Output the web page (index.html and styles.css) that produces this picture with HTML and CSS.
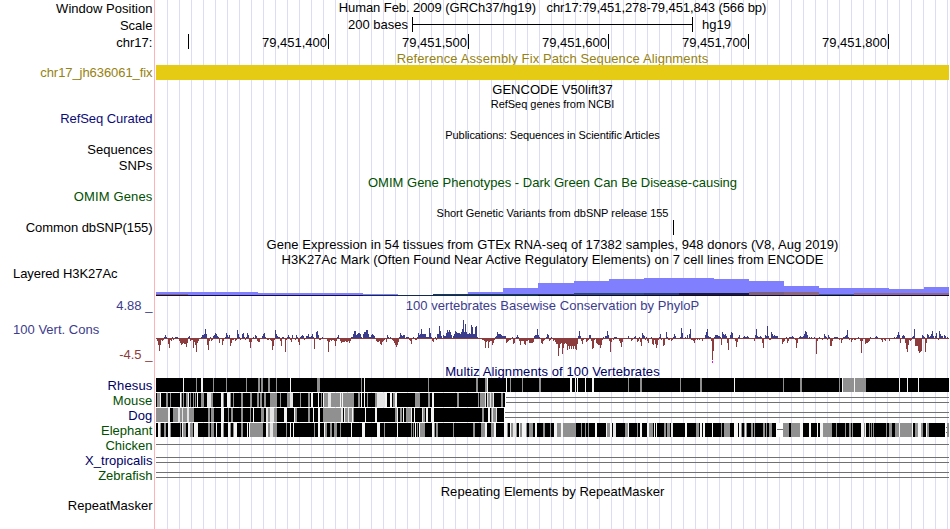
FILE: index.html
```html
<!DOCTYPE html>
<html lang="en">
<head>
<meta charset="utf-8">
<title>chr17:79,451,278-79,451,843</title>
<link rel="stylesheet" href="styles.css">
</head>
<body>
<main class="browser">
  <div class="row h17"><span class="label">Window Position</span><div class="title up t-pos">Human Feb. 2009 (GRCh37/hg19) &nbsp; chr17:79,451,278-79,451,843 (566 bp)</div></div>
  <div class="row h17"><span class="label">Scale</span><div class="scale"><span class="scale-text">200 bases</span><i class="scale-bar"></i><span class="scale-db">hg19</span></div></div>
  <div class="row h17"><span class="label">chr17:</span><div class="ruler"><span></span><span>79,451,400</span><span>79,451,500</span><span>79,451,600</span><span>79,451,700</span><span>79,451,800</span></div></div>
  <div class="row h14"><span></span><div class="title gold t-ref">Reference Assembly Fix Patch Sequence Alignments</div></div>
  <div class="row h15"><span class="label tight gold">chr17_jh636061_fix</span><div class="patch"></div></div>
  <div class="row h17"><span></span><div class="title down">GENCODE V50lift37</div></div>
  <div class="row h13"><span></span><div class="title small">RefSeq genes from NCBI</div></div>
  <div class="row h17"><span class="label tight navy">RefSeq Curated</span></div>
  <div class="row h15"><span></span><div class="title small down t-pub">Publications: Sequences in Scientific Articles</div></div>
  <div class="row h15"><span class="label">Sequences</span></div>
  <div class="row h16"><span class="label wide">SNPs</span></div>
  <div class="row h16"><span></span><div class="title green down t-omim">OMIM Gene Phenotypes - Dark Green Can Be Disease-causing</div></div>
  <div class="row h15"><span class="label wide green">OMIM Genes</span></div>
  <div class="row h16"><span></span><div class="title small down">Short Genetic Variants from dbSNP release 155</div></div>
  <div class="row h15"><span class="label tight">Common dbSNP(155)</span><div class="snp"></div></div>
  <div class="row h17"><span></span><div class="title down t-gtex">Gene Expression in 54 tissues from GTEx RNA-seq of 17382 samples, 948 donors (V8, Aug 2019)</div></div>
  <div class="row h14"><span></span><div class="title t-h3k">H3K27Ac Mark (Often Found Near Active Regulatory Elements) on 7 cell lines from ENCODE</div></div>
  <div class="row h30"><span class="label tight left h3k-label">Layered H3K27Ac</span><svg id="h3k" width="793" height="30" shape-rendering="crispEdges"></svg></div>
  <div class="row cons">
    <div class="axis"><span class="label blue">4.88 _</span><span class="label blue left up">100 Vert. Cons</span><span class="label red">-4.5 _</span></div>
    <div class="wiggle"><div class="title blue">100 vertebrates Basewise Conservation by PhyloP</div><svg id="phylop" width="793" height="48" shape-rendering="crispEdges"></svg></div>
  </div>
  <div class="row h15"><span></span><div class="title navy2 down t-multiz">Multiz Alignments of 100 Vertebrates</div></div>
  <div class="row h15"><span class="label wide navy2">Rhesus</span><svg id="rhesus" width="793" height="15" shape-rendering="crispEdges"></svg></div>
  <div class="row h15"><span class="label wide green">Mouse</span><svg id="mouse" width="793" height="15" shape-rendering="crispEdges"></svg></div>
  <div class="row h15"><span class="label wide navy2">Dog</span><svg id="dog" width="793" height="15" shape-rendering="crispEdges"></svg></div>
  <div class="row h15"><span class="label green">Elephant</span><svg id="elephant" width="793" height="15" shape-rendering="crispEdges"></svg></div>
  <div class="row h15"><span class="label green">Chicken</span><div class="single"></div></div>
  <div class="row h15"><span class="label navy2">X_tropicalis</span><div class="double"></div></div>
  <div class="row h15"><span class="label green">Zebrafish</span><div class="double"></div></div>
  <div class="row h15"><span></span><div class="title down">Repeating Elements by RepeatMasker</div></div>
  <div class="row h15"><span class="label">RepeatMasker</span></div>
</main>
<script src="tracks.js"></script>
</body>
</html>
```
FILE: styles.css
```css
* { box-sizing: border-box; }
body { margin: 0; background: #fff; overflow: hidden; }
.browser {
  width: 950px; height: 529px; overflow: hidden;
  font: 13px/15px "Liberation Sans", Arial, sans-serif; color: #000;
  background:
    linear-gradient(#ffb4b4, #ffb4b4) 154px 0 / 1px 100% no-repeat,
    repeating-linear-gradient(90deg, #dcdcf5 0 1px, transparent 1px 12px) 167px 0 / 783px 100% no-repeat;
}
.row { display: grid; grid-template-columns: 152.5px 793px; column-gap: 3.5px; }
.row > * { min-width: 0; }
svg { display: block; }
.h13 { height: 13px; } .h14 { height: 14px; } .h15 { height: 15px; } .h16 { height: 16px; }
.h17 { height: 17px; } .h30 { height: 30px; }
.label { text-align: right; white-space: nowrap; letter-spacing: .02px; align-self: center; }
.label.wide { letter-spacing: .15px; }
.label.tight { letter-spacing: -.07px; }
.label.left { text-align: left; padding-left: 13px; }
.title { text-align: center; white-space: nowrap; align-self: center; letter-spacing: .03px; }
.title.small { font-size: 11px; letter-spacing: -.03px; }
.title.t-pos { letter-spacing: -.08px; }
.title.t-ref { letter-spacing: .11px; }
.title.t-pub { letter-spacing: -.07px; }
.title.t-omim { letter-spacing: .01px; }
.title.t-gtex, .title.t-h3k { letter-spacing: .05px; }
.title.t-multiz { letter-spacing: .1px; }
.up { transform: translateY(-1px); }
.down { transform: translateY(1px); }
.gold { color: #968210; } .navy { color: #0c0c78; } .navy2 { color: #000064; }
.green { color: #005000; } .blue { color: #3c3c8c; } .red { color: #8c3c3c; }
.scale { display: flex; }
.scale-text { width: 256px; text-align: right; padding-right: 4px; line-height: 15px; }
.scale-bar {
  width: 281px; height: 15px; border: solid #000; border-width: 0 1px;
  background: linear-gradient(#000, #000) 0 7px / 100% 1px no-repeat;
}
.scale-db { padding-left: 9px; }
.ruler { display: flex; height: 15px; line-height: 17px; }
.ruler span { width: 140px; border-right: 1px solid #000; text-align: right; padding-right: 1px; }
.ruler span:first-child { width: 33px; }
.patch { background: #e6cb14; }
.snp { width: 518px; border-right: 1px solid #000; }
.h3k-label { align-self: start; }
.cons { height: 67px; }
.axis { display: flex; flex-direction: column; padding-top: 2px; height: 66px; justify-content: space-between; }
.axis .label { align-self: stretch; }
.wiggle { padding-top: 2px; }
.wiggle .title { height: 17px; }
.single { background: linear-gradient(#707070, #707070) 0 6px / 100% 1px no-repeat; }
.double {
  background:
    linear-gradient(#707070, #707070) 0 4px / 100% 1px no-repeat,
    linear-gradient(#707070, #707070) 0 9px / 100% 1px no-repeat;
}
```
FILE: tracks.js
```js
const LEFT = 156;
const NS = 'http://www.w3.org/2000/svg';

function rect(svg, x, y, w, h, fill) {
  const r = document.createElementNS(NS, 'rect');
  const a = { x: x - LEFT, y, width: w, height: h, fill };
  for (const k in a) r.setAttribute(k, a[k]);
  svg.appendChild(r);
}

// Layered H3K27Ac signal: [start, end, height above the baseline]
const h3k = document.getElementById('h3k');
[[156,258,3],[258,363,2],[363,398,1],[468,503,3],[503,538,7],[538,574,12],[574,609,14],[609,644,16],
 [644,714,17],[714,749,16],[749,784,14],[784,819,9],[819,889,7],[889,924,6],[924,949,8]]
  .forEach(([a, b, h]) => rect(h3k, a, 29 - h, b - a, h, '#8080ff'));
[[156,188,28,1,'#806478'],[433,574,28,1,'#183858'],[574,644,27,2,'#284878'],[644,679,27,2,'#243c70'],[679,749,27,2,'#181c3c'],
 [749,784,26,3,'#7c6080'],[784,819,26,3,'#8c6880'],[819,854,28,1,'#3860a0'],[854,949,27,2,'#8c6890'],
 [156,363,29,1,'#140a46'],[363,538,29,1,'#142850'],[538,949,29,1,'#180828']]
  .forEach(([a, b, y, h, c]) => rect(h3k, a, y, b - a, h, c));

// PhyloP scores in pixels: start position, then one value per base column
const phylop = document.getElementById('phylop');
const scores = `
156 -1 -3 -7 -13 -7 -2 -3 -2 1 3 1 -1
168 -6 -10 -2 -3 1 -2 -1 1 1 1 -1
179 -3 -5 -7 -6 -5 -6 -6 -9 -5 1 2
190 -3 -2 -2 -10 -4 -7 -14 -5 -3 -1 -1
201 1 3 3 4 9 4 -7
208 -12 -3 1 -3 -2 2 3 5 4 2 1 -5 -1 -1
222 -7 -3 -1 1 5 3 1 3
230 -8 -5 -2 -2 -1 -3 -2
237 8 4 1 -2 -1 4 5 1 -2 1 5 3 -4
250 -10 -4 -1 1 -1 3 2 -3 -4 -4 -1 -1 2 4 5 1 -1 -2 -2 -1 -2 -3
272 -12 -8 -2 8 4 2 1 1 -3 -8 1 1 -1 -7
285 -14 -2 1 3 1 -2 -4 3 -1 -1 -2 3 1
298 -4 -7 1 2 3 2 -2 -1 2 2 4 1 1 2 4 1
314 -11 -1 6 7 3 -2 -2 -1 1 -1 -1 -1 -1 -3
328 -14 -4 -2 -3 -2 -2 -3
335 -8 -3 1 3 -1 -3 -5 -4 -4 -4 -3 -4 -4 -3 -5 -3 1 1
353 4 7 7 3 4 5 5 4 1 -1
363 4 6 6 8 8 4 1 1 3 4 3 2 -1 -3 -4 -4 -3
380 -6 -7 -4 -3 -2 -1 -4 3 1 -1 1 -1 -2 -3 -5
395 -7 -9 -7 -4 1 5 3 2 3 3 -1 1 1 1 -2
410 -3 -6 -1 1 -1 -2 -2 1
418 5 3 4 9 4 4 4 4 1 1 1
429 10 5 1 -3 -4 -1 1 -2 4
438 4 12 7 2 -1 3 2 2
446 5 8 6 8 6 3 -1 2 4 7 6 5 5 5 4
461 6 9 18 6 14 6 4 4 5 4 13 11 4
474 4 11 12 1 -1 -1 -1 -1 -2 -2 -3
485 -10 -4 -3
488 -10 -4 -3 -3 -7 -5 -2 1 2 6 4 4 4 3
502 2 2 2 2 -5 -4 -3 -2 -2 -1 1
513 -6 -5 -1 1 3 1 -3 -7
521 -3 -3 -3 -6 -7 -3 -3 -2
529 -5 -5 -5 -5 -4 2 3 3 9 3 1 -1
541 -5 -6 -3 -2 -1 1 4 3 -3 -2 1 -1 -3 -2 -4 -6 -6
558 -18 -10 -6 -5 -16 -10 -6 -5 -6
567 -12 -8 -11 -8 -11 -8 -11 -8 -11 -12 -6 2
579 7 2 -3 -6 -2 -1 -1 -4 -3 -2 3
590 3 -3 -11 -10 -2 -1 -5 -6 -7 -7 -10 -7
602 -2 1 -1 2 2 7 3 -3
610 -14 -4 -1 -2 1 1 1 -1 -1
619 -3 -5 -9 -4 -1 -1 -1 -1 -1
628 2 -1 -1 -3 -2 -1 1 2 -1 -4 -3 1 -4
641 -8 5 3 2 -2 1 -3 -5 -1 -1 1 -6 -7 -2 -6
656 -10 -7 -2 1 4 -2 -1
663 -8 -7 -1 6 1 -2 -2 -1 -3 -2 1 4 2 -1 -1 -1 -1
680 1 10 5 -1 -1 1 -1 3 -1 4
690 9 -2 -2 -3 -5 -2 -1 -2 -1 -2 -1 -1 -3 -1 -1 3
706 6 9 2 1 1 -3
712 -22 -13 1 3 3 3 2 2 1
721 -7 6 4 3 4 2 -5
728 -12 -1 3 6 5 -1 -1 -3
736 -9 -4 1 3 -1 -1 -1 1 2 1 1 2 1 -1 -1 -1 -1 -1 -3 3
756 9 2 1 1 2 1 -5
763 -10 -1 3 2
767 12 2 -2 -2 6 4 2 3 2 2 2 -1 -1 -1 -1
782 -6 -4 -3 -1 1 -5 -3 1 1 1 2 1 -1 -2
796 -10 -5 -1 1 2 1 1 2 4 7 6 3 -1 1 -1 1 -1 -1 1 -1
816 -16 -3 -1 1 -1 -1 -2 -1 4 2 1 -2 3 1
830 -8 -8 -3 -1 1 1 1 1 -1 -2 -1
841 -5 -2 1 1 2 3
847 8 1 -2 -1 -4 -2 -1 -2 -2 -1 -1 1 -1 -3
861 -15 -3 -1 -1 -6 -5 -5 -4 -3 1 -1 -1 -1 -1
875 1 2 1 -1 -1 -1 -2 -4 -1 -2 -3 -1 -1 -1
889 -3 -1 -1 -1 -1 1 -1 1 3
898 6 3 -5 -1 2 3 2 -5
906 -11 -14 -7 -2 -3 -2 1 2
914 9 -8 -8 -8 -13 -15 -14 -13
922 3 2 1 -14 -5 4 3 1 2 4 7 2 -1 2 5 -1 -2 1
939 7 4 2 2 -1 3 2 -1 1 -1
`;
rect(phylop, LEFT, 23, 793, 1, '#8c3c3c');
scores.trim().split('\n').forEach(line => {
  const [start, ...vals] = line.trim().split(' ').map(Number);
  vals.forEach((v, i) => {
    if (v > 0) rect(phylop, start + i, 23 - v, 1, v, '#3c3c8c');
    else rect(phylop, start + i, 23, 1, -v, '#8c3c3c');
  });
});
rect(phylop, 712, 46, 1, 2, '#ff00ff');

// Alignment identity stripes over black, in thirds of a pixel from `base`
const COLORS = { g: '#909090', l: '#e4e4e4', w: '#f4f4f4', x: '#ffffff' };
function stripes(svg, base, text) {
  text.trim().split(/\s+/).forEach(tok => {
    const [a, b] = tok.slice(1).split('-').map(Number);
    const x0 = Math.round(a / 3);
    const x1 = b ? Math.max(x0 + 1, Math.round(b / 3)) : x0 + 1;
    rect(svg, base + x0, 0, x1 - x0, 14, COLORS[tok[0]]);
  });
}
function species(id, end, parts) {
  const svg = document.getElementById(id);
  rect(svg, LEFT, 0, end - LEFT, 14, '#000');
  for (const [base, text] of parts) stripes(svg, base, text);
  if (end < 949) [4, 9].forEach(y => rect(svg, end + 1, y, 949 - end - 1, 1, '#707070'));
  return svg;
}
species('rhesus', 949, [
  [150, 'w99 g138 w153-159 g189 g228 g288 g324-330 g333-339 g354-360 g378 w420 g501-510 g633 w642'],
  [410, 'g54 g198-204 g225-231 w231 w288 g300 g336 g387-393 w480-486 w495 w501 w525 w546-552 g654 g690-696'],
  [680, 'g0 g60-66 w162 g309 g360-366 g477 w486 g489-522 w522 g525-558 w657 w681 w714'],
]);
species('mouse', 505, [
  [150, 'g21 g24-30 w30 g48-54 g60 w90 g93 g99 g108-114 w114 g120 g129 g135 w141 g153-162 l171-183 g183-189 w213-219 g219 w231-240 g240 g249 g273-279 g300-306 g321-327 g330-336 g342-348 g360-381 g390 g411-420 l420-429 g450 g474-480 w483-489 w504 g513-516 w519 g522-534 l534-543 g543-570 w570 g573 w576 g579-612 g624-630 w633 w642 g651 g675-681 l681-705 w705-711 w720-726 g729-735 w735-741 g795-810'],
  [410, 'g15-30 g54-60 w66-72 g141-147 g204 g210-225 l225 l231-234 g234-240 l240 g243-249 l249 g273-279'],
]);
species('dog', 504, [
  [150, 'g18-54 w54-60 g69-84 l84-90 g90-96 l96 g99-111 l111-117 g117-132 g174-180 g183-192 w213-222 g234 g243-249 g273-279 g300 w309 g333-342 l348-354 g354-360 l360-372 g372-381 w402-411 w432 g435-441 g474-480 w489 w504-510 g519-573 l573-579 w582 g585-594 l594 g597-606 w606 g609 w645 w675-681 g735-741 w741 g750-756 w759 g768-783 w792'],
  [410, 'w3 w12 l36 g39-45 w48-54 w63-72 g216-222 w234-240 g243-249 l246 g249-258 l258'],
]);
const elephant = species('elephant', 949, [
  [150, 'w24-30 g30 g42-48 w54-60 g60 g90 w96 g99-108 w114-120 g120-129 w132-144 g174-180 g183-192 w198 w213-219 g219 w234-240 g240 g249 w252-261 g273-279 w291 w297 g300-339 w348-354 g354-360 l360-369 g369-381 g408 w420 w429 g492 w504-510 w522 g525-531 g540-546 g552-561 g570 w603 w636-645 w681-690 g702 w741 g783 w795'],
  [410, 'g3 g9 g21 w27 g30-45 w66-72 g72 g78-84 g129 g189-195 g213-225 w225-231 g243-252 w252-258 w282-291 g291 w300 g303-309 l309-318 g318 w327 g330-336 w336-348 g348 g357-369 w375-381 g399-405 g420 w432-441 g441-453 w453-459 g459-498 g513 g525 g534 w555-561 w588 g591-600 w600-606 l609-618 g645-654 w654 g681 w690-696 w711-717 g717-729 w732 w738 g762-768 g771-780 l783-789'],
  [680, 'w15-21 g48-57 w60-66 w69-75 w96 g123 g132-150 w162-174 w177-183 g183 g192 w195 g198 g213-219 g222 g249-255 g258 g267-276 x288-309 g309-327 g333-360 w360-369 w387-393 w411 w420-429 g429-456 g468 g495 g507-513 g516 w543-552 g552 w555 g567 g573 g579 g618 g627-636 g645-657 w657 g660-696 w696 g705-714 w714-723 g723-729 w738 g741-747 x795-807 g801-807'],
]);
rect(elephant, 777, 6, 6, 1, '#707070');
rect(elephant, 946, 4, 1, 1, '#707070');
rect(elephant, 946, 9, 1, 1, '#707070');
```
